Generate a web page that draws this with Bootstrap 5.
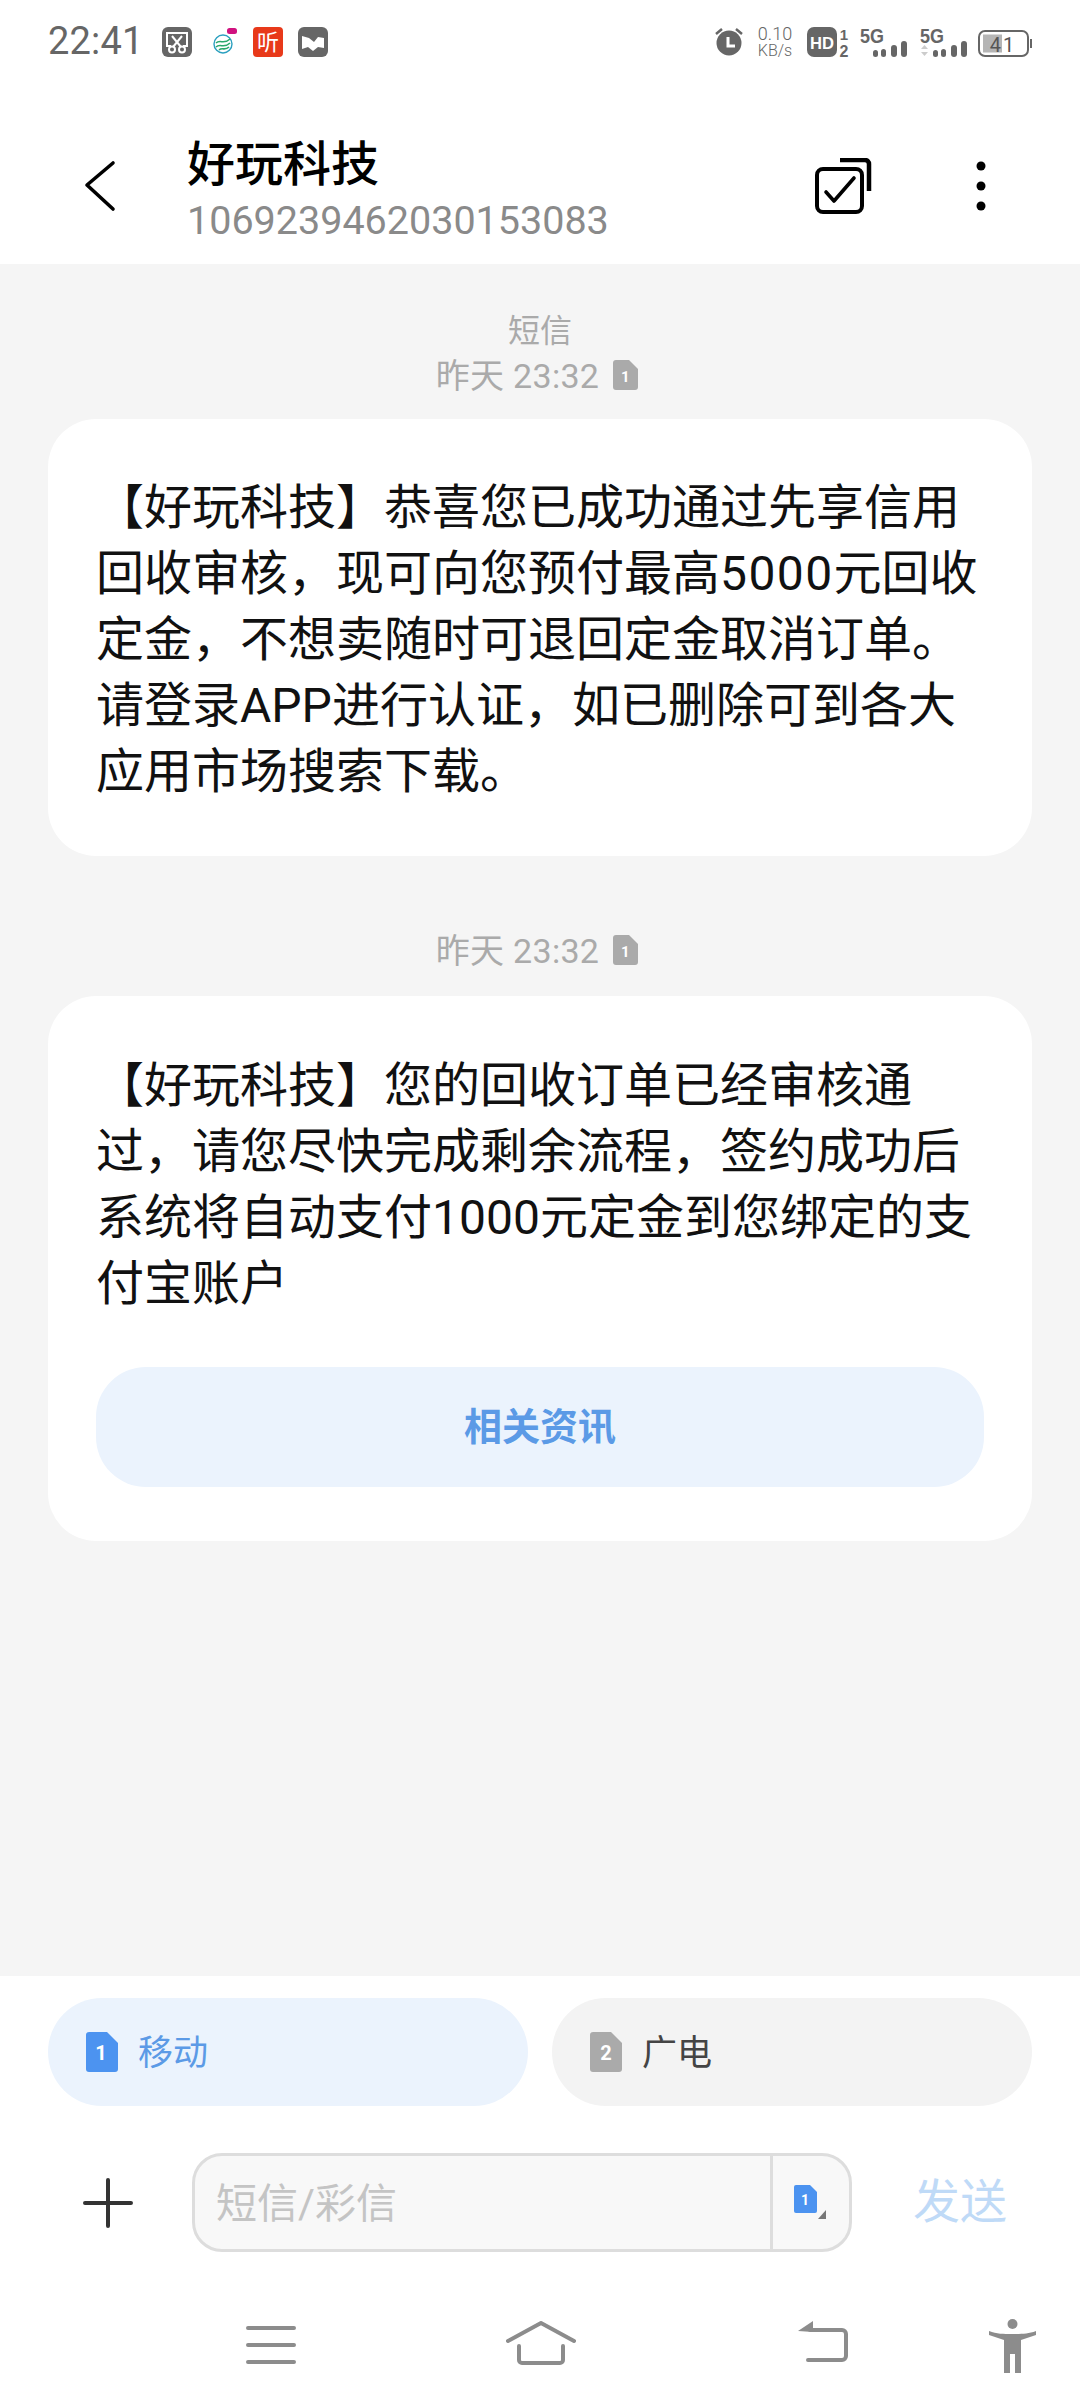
<!DOCTYPE html>
<html lang="zh">
<head>
<meta charset="utf-8">
<title>短信</title>
<link href="https://cdn.jsdelivr.net/npm/bootstrap@5.3.0/dist/css/bootstrap.min.css" rel="stylesheet">
<style>
html,body{margin:0;background:#fff}
body{font-family:"Roboto","Noto Sans CJK SC",sans-serif;width:1080px;height:2408px;overflow:hidden}
.phone{height:2408px}
.statusline{height:84px;padding:0 48px;color:#666}
.clock{font-size:38px;line-height:1;margin-top:-3px;margin-right:18px;letter-spacing:.2px}
.sicon{width:30px;height:30px;display:block;flex:none}
.sicon-tall{height:38px}
.sicon-logo{width:24px;margin-left:21px;margin-right:16px}
.sicon-next{margin-left:15px}
.speed{font-size:18px;line-height:17px;text-align:center;width:36px;margin-left:13px;font-weight:300}
.speed span{display:block;font-size:16px}
.hdmark{margin-left:14px}
.netfirst{margin-left:11px}
.netnext{margin-left:12px}
.batterymark{margin-left:10px}
.topbar{height:180px;padding-top:24px;padding-left:84px;padding-right:94px}
.chev{width:32px;height:52px}
.titles{margin-left:71px;margin-top:9px}
.ttl{font-size:48px;line-height:56px;font-weight:500;color:#000}
.num{font-size:39.5px;line-height:46px;color:#8a8a8a;margin-top:5px}
.multi{width:57px;height:56px;margin-right:104px}
.dots{width:10px;height:50px}
.thread{background:#f5f5f5;padding:45px 48px 0}
.stamp{color:#aaa;font-size:32px;line-height:45px;text-align:center}
.stamp-time{font-size:34px;letter-spacing:.3px;padding-right:6px}
.mini{width:25px;height:30px;margin-left:14px;margin-top:-4px}
.bubble{background:#fff;border-radius:48px;padding:56px 48px 51px;font-size:48px;line-height:66px;color:#111;margin-top:20px;margin-bottom:73px}
.bubble-last{padding-top:57px;padding-bottom:54px;margin-top:22px}
.wide{letter-spacing:1.4px}
.infobtn{background:#ebf3fd;color:#5b9ae6;font-size:38px;font-weight:700;height:120px;border-radius:50px;border:0;margin-top:50px;width:100%}
.infobtn:hover{background:#ebf3fd;color:#5b9ae6}
.composer{height:432px}
.simrow{padding:22px 48px 0;gap:24px}
.simpill{height:108px;border-radius:54px;padding-left:38px;font-size:35px;background:#f3f3f3;color:#444;gap:20px}
.simpill.on{background:#ebf3fd;color:#5b9ae6}
.simname{margin-top:4px}
.simmark{width:32px;height:40px}
.inputrow{padding:47px 60px 0 83px;height:146px}
.plusmark{width:50px;height:50px;margin-right:59px}
.inputbox{width:660px;height:99px;border:3px solid #ddd;border-radius:30px;background:#f8f8f8;overflow:hidden}
.hinttext{font-size:41px;color:#c4c4c4;padding-left:21px;width:578px;border-right:3px solid #ddd;line-height:97px;height:93px}
.simpick{flex:1;padding-left:21px}
.simpick svg{width:34px;height:36px}
.sendbtn{font-size:47px;color:#bfdaf7;margin-left:61px;font-weight:400;white-space:nowrap;flex:none}
.navrow{height:89px;margin-top:67px;padding-left:246px}
.navmenu{margin-top:6px}
.navhome{margin-left:210px;margin-top:2px}
.navback{margin-left:222px;margin-top:2px}
.navman{margin-left:141px}
</style>
</head>
<body>
<div class="phone d-flex flex-column">
  <div class="statusline d-flex align-items-center">
    <span class="clock">22:41</span>
    <svg class="sicon" viewBox="0 0 30 30"><rect width="30" height="30" rx="6" fill="#666"/><path d="M9 19H5V6h20v13h-4" fill="none" stroke="#fff" stroke-width="2"/><path d="M10 9l9 11M20 9l-9 11" stroke="#fff" stroke-width="2"/><circle cx="10" cy="22.500" r="3" fill="none" stroke="#fff" stroke-width="2"/><circle cx="20" cy="22.500" r="3" fill="none" stroke="#fff" stroke-width="2"/></svg>
    <svg class="sicon sicon-logo" viewBox="0 0 24 30"><ellipse cx="10" cy="17" rx="9" ry="9" fill="#fff" stroke="#2a9fbf" stroke-width="1.400"/><path d="M3 16c4-4 8 2 14-4M3 20c4-4 8 2 14-4M6 23c3-3 6 1 10-3" fill="none" stroke="#2aa86c" stroke-width="1.600"/><rect x="14" y="1" width="10" height="6" rx="2.500" fill="#d0127f"/></svg>
    <svg class="sicon sicon-tall" viewBox="0 -4 30 38"><rect width="30" height="30" rx="4" fill="#e8391a"/><text x="15" y="23" text-anchor="middle" font-family="Noto Sans CJK SC" font-size="22" fill="#fff">听</text></svg>
    <svg class="sicon sicon-next" viewBox="0 0 30 30"><rect width="30" height="30" rx="6" fill="#666"/><path d="M4 9l7 2 5 4 4-5 6 1v10l-6-1-5 4-5-4-6 2z" fill="#fff"/></svg>
    <div class="flex-grow-1"></div>
    <svg class="sicon" viewBox="0 0 30 30"><circle cx="15" cy="16" r="12.500" fill="#666"/><path d="M2 7l6-5M28 7l-6-5" stroke="#666" stroke-width="2.500"/><path d="M14 10v9h7" fill="none" stroke="#fff" stroke-width="3"/></svg>
    <div class="speed">0.10<span>KB/s</span></div>
    <svg class="hdmark" width="42" height="38" viewBox="0 -4 42 38"><rect width="30" height="30" rx="7" fill="#666"/><text x="15" y="21.500" text-anchor="middle" font-family="Liberation Sans" font-weight="700" font-size="17" fill="#fff" textLength="24" lengthAdjust="spacingAndGlyphs">HD</text><text x="37" y="13" text-anchor="middle" font-family="Liberation Sans" font-weight="700" font-size="15" fill="#666">1</text><text x="37" y="30" text-anchor="middle" font-family="Liberation Sans" font-weight="700" font-size="16" fill="#666">2</text></svg>
    <svg class="netfirst" width="48" height="38" viewBox="0 -4 48 38"><text x="0" y="16" font-family="Liberation Sans" font-weight="700" font-size="20" fill="#666" textLength="24" lengthAdjust="spacingAndGlyphs">5G</text><rect x="13" y="23" width="5" height="7" rx="2.500" fill="#666"/><rect x="21" y="22" width="5" height="8" rx="2.500" fill="#666"/><rect x="31" y="18" width="6" height="12" rx="3" fill="#666"/><rect x="41" y="14" width="6" height="16" rx="3" fill="#666"/></svg>
    <svg class="netnext" width="48" height="38" viewBox="0 -4 48 38"><text x="0" y="16" font-family="Liberation Sans" font-weight="700" font-size="20" fill="#666" textLength="24" lengthAdjust="spacingAndGlyphs">5G</text><path d="M1 22l3.500-4 3.500 4zM1 25l3.500 4 3.500-4z" fill="#ccc"/><rect x="13" y="23" width="5" height="7" rx="2.500" fill="#666"/><rect x="21" y="22" width="5" height="8" rx="2.500" fill="#666"/><rect x="31" y="18" width="6" height="12" rx="3" fill="#666"/><rect x="41" y="14" width="6" height="16" rx="3" fill="#666"/></svg>
    <svg class="batterymark" width="54" height="38" viewBox="0 -4 54 38"><rect x="1" y="4" width="49" height="25" rx="6" fill="#fff" stroke="#666" stroke-width="2"/><rect x="5" y="7.500" width="19" height="18" fill="#b5b5b5"/><text x="25" y="25" text-anchor="middle" font-family="Roboto" font-size="20" fill="#555" letter-spacing="2">41</text><rect x="52" y="12" width="2" height="9" fill="#666"/></svg>
  </div>

  <div class="topbar d-flex align-items-center">
    <svg class="chev" viewBox="0 0 32 52"><path d="M29 3L3 25l26 24" fill="none" stroke="#000" stroke-width="3.600" stroke-linecap="round" stroke-linejoin="round"/></svg>
    <div class="titles flex-grow-1">
      <div class="ttl">好玩科技</div>
      <div class="num">1069239462030153083</div>
    </div>
    <svg class="multi" viewBox="0 0 57 56"><path d="M25 2h25a4 4 0 0 1 4 4v27" fill="none" stroke="#000" stroke-width="4.500"/><rect x="2" y="11" width="45" height="43" rx="6" fill="#fff" stroke="#000" stroke-width="4"/><path d="M11 34l8 9 20-23" fill="none" stroke="#000" stroke-width="3.600" stroke-linecap="round" stroke-linejoin="round"/></svg>
    <svg class="dots" viewBox="0 0 10 50"><circle cx="5" cy="5" r="4.500"/><circle cx="5" cy="25" r="4.500"/><circle cx="5" cy="45" r="4.500"/></svg>
  </div>

  <main class="thread flex-grow-1">
    <div class="stamp">短信</div>
    <div class="stamp stamp-time d-flex justify-content-center align-items-center">昨天 23:32<svg class="mini" viewBox="0 0 25 30"><path d="M3 0h13l9 9v18a3 3 0 0 1-3 3H3a3 3 0 0 1-3-3V3a3 3 0 0 1 3-3z" fill="#aaa"/><text x="12.500" y="22" text-anchor="middle" font-family="Roboto" font-weight="700" font-size="15" fill="#fff">1</text></svg></div>
    <div class="bubble">【好玩科技】恭喜您已成功通过先享信用<br>回收审核，现可向您预付最高<span class="wide">5000</span>元回收<br>定金，不想卖随时可退回定金取消订单。<br>请登录APP进行认证，如已删除可到各大<br>应用市场搜索下载。</div>
    <div class="stamp stamp-time d-flex justify-content-center align-items-center">昨天 23:32<svg class="mini" viewBox="0 0 25 30"><path d="M3 0h13l9 9v18a3 3 0 0 1-3 3H3a3 3 0 0 1-3-3V3a3 3 0 0 1 3-3z" fill="#aaa"/><text x="12.500" y="22" text-anchor="middle" font-family="Roboto" font-weight="700" font-size="15" fill="#fff">1</text></svg></div>
    <div class="bubble bubble-last">【好玩科技】您的回收订单已经审核通<br>过，请您尽快完成剩余流程，签约成功后<br>系统将自动支付1000元定金到您绑定的支<br>付宝账户
      <button type="button" class="btn infobtn d-block">相关资讯</button>
    </div>
  </main>

  <footer class="composer">
    <div class="simrow d-flex">
      <div class="simpill on flex-fill w-50 d-flex align-items-center"><svg class="simmark" viewBox="0 0 32 40"><path d="M3 0h18l11 11v26a3 3 0 0 1-3 3H3a3 3 0 0 1-3-3V3a3 3 0 0 1 3-3z" fill="#4c93f0"/><text x="15" y="28" text-anchor="middle" font-family="Roboto" font-weight="700" font-size="20" fill="#fff">1</text></svg><span class="simname">移动</span></div>
      <div class="simpill flex-fill w-50 d-flex align-items-center"><svg class="simmark" viewBox="0 0 32 40"><path d="M3 0h18l11 11v26a3 3 0 0 1-3 3H3a3 3 0 0 1-3-3V3a3 3 0 0 1 3-3z" fill="#aaa"/><text x="16" y="28" text-anchor="middle" font-family="Roboto" font-weight="700" font-size="20" fill="#fff">2</text></svg><span class="simname">广电</span></div>
    </div>
    <div class="inputrow d-flex align-items-center">
      <svg class="plusmark" viewBox="0 0 50 50"><path d="M25 2v46M2 25h46" stroke="#333" stroke-width="4" stroke-linecap="round"/></svg>
      <div class="inputbox d-flex">
        <div class="hinttext">短信/彩信</div>
        <div class="simpick d-flex align-items-center"><svg viewBox="0 0 34 36"><path d="M2 0h14l7 7v19a2 2 0 0 1-2 2H2a2 2 0 0 1-2-2V2a2 2 0 0 1 2-2z" fill="#4c93f0"/><text x="11" y="20" text-anchor="middle" font-family="Roboto" font-weight="700" font-size="14" fill="#fff">1</text><path d="M32 25v9h-8z" fill="#777"/></svg></div>
      </div>
      <div class="sendbtn">发送</div>
    </div>
    <nav class="navrow d-flex align-items-start">
      <svg class="navmenu" width="50" height="40" viewBox="0 0 50 40"><path d="M2 3h46M2 20h46M2 37h46" stroke="#8c8c8c" stroke-width="4" stroke-linecap="round"/></svg>
      <svg class="navhome" width="70" height="44" viewBox="0 0 70 44"><path d="M2 20L35 2l33 18M13 25v14a3 3 0 0 0 3 3h38a3 3 0 0 0 3-3V25" fill="none" stroke="#8c8c8c" stroke-width="4" stroke-linecap="round" stroke-linejoin="round"/></svg>
      <svg class="navback" width="50" height="42" viewBox="0 0 50 42"><path d="M0 10L15 0v7z M0 10l15 1V7z" fill="#8c8c8c"/><path d="M12 9h32a4 4 0 0 1 4 4v22a4 4 0 0 1-4 4H10" fill="none" stroke="#8c8c8c" stroke-width="4" stroke-linecap="round"/></svg>
      <svg class="navman" width="47" height="54" viewBox="0 0 47 54"><circle cx="23.500" cy="5" r="5" fill="#8c8c8c"/><path d="M0 12c8 3 14 3 23.500 3S39 15 47 12v4l-15 5v33h-6V35h-5v19h-6V21L0 16z" fill="#8c8c8c"/></svg>
    </nav>
  </footer>
</div>
<script src="https://cdn.jsdelivr.net/npm/bootstrap@5.3.0/dist/js/bootstrap.bundle.min.js"></script>
</body>
</html>
